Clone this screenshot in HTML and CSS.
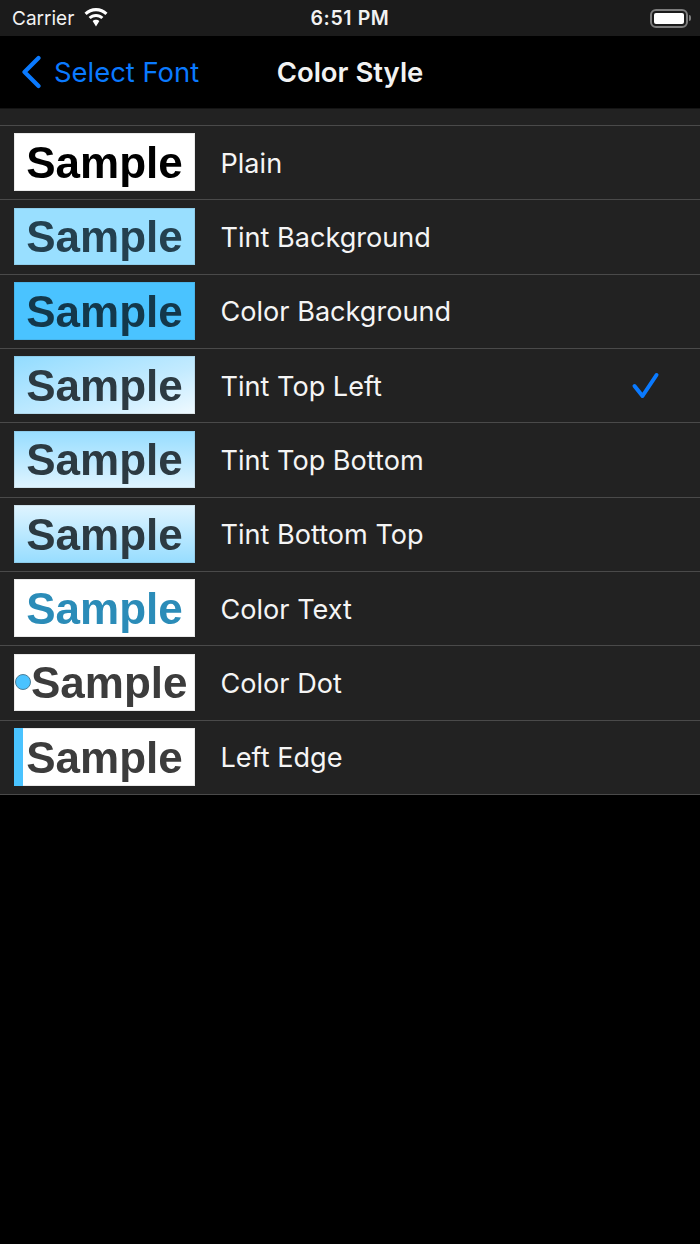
FILE: index.html
```html
<!DOCTYPE html>
<html lang="en">
<head>
<meta charset="utf-8">
<title>Color Style</title>
<link rel="stylesheet" href="styles.css">
</head>
<body>
<header class="status">
  <div class="status-left">
    <span class="carrier">Carrier</span>
    <svg class="wifi" viewBox="0 0 26 19" width="26" height="19"><path d="M13 3.200c3.600 0 6.900 1.400 9.400 3.700l2.100-2.200C21.500 1.900 17.500 0 13 0S4.500 1.900 1.500 4.700l2.100 2.200C6.100 4.600 9.400 3.200 13 3.200zM13 9c2 0 3.900.8 5.300 2.100l2.100-2.200C18.400 7.100 15.800 6 13 6S7.600 7.100 5.600 8.900l2.100 2.200C9.100 9.800 11 9 13 9zM13 11.800c-1.300 0-2.500.5-3.400 1.300L13 18.500l3.400-5.400c-.9-.8-2.100-1.300-3.400-1.300z" fill="#fff"/></svg>
  </div>
  <span class="clock">6:51 PM</span>
  <div class="status-right">
    <span class="battery"><span class="battery-fill"></span></span>
    <span class="battery-cap"></span>
  </div>
</header>
<nav class="navbar">
  <a class="back">
    <svg class="chevron" viewBox="0 0 20 34" width="20" height="34"><path d="M17.500 3L3.500 17l14 14" fill="none" stroke="#0a7aff" stroke-width="4.200" stroke-linecap="round" stroke-linejoin="round"/></svg>
    <span>Select Font</span>
  </a>
  <h1 class="title">Color Style</h1>
</nav>
<div class="spacer"></div>
<ul class="list">
  <li class="row"><div class="thumb plain"><span class="sample black">Sample</span></div><span class="label">Plain</span></li>
  <li class="row"><div class="thumb tint"><span class="sample dark">Sample</span></div><span class="label">Tint Background</span></li>
  <li class="row"><div class="thumb color"><span class="sample darker">Sample</span></div><span class="label">Color Background</span></li>
  <li class="row"><div class="thumb tl"><span class="sample grey">Sample</span></div><span class="label">Tint Top Left</span>
    <svg class="check" viewBox="0 0 30 30" width="30" height="30"><path d="M3.500 15L11.500 25L25.500 4" fill="none" stroke="#0a7aff" stroke-width="4" stroke-linecap="round" stroke-linejoin="round"/></svg></li>
  <li class="row"><div class="thumb tb"><span class="sample grey">Sample</span></div><span class="label">Tint Top Bottom</span></li>
  <li class="row"><div class="thumb bt"><span class="sample grey">Sample</span></div><span class="label">Tint Bottom Top</span></li>
  <li class="row"><div class="thumb plain"><span class="sample blue">Sample</span></div><span class="label">Color Text</span></li>
  <li class="row"><div class="thumb plain dotted"><span class="dot"></span><span class="sample charcoal">Sample</span></div><span class="label">Color Dot</span></li>
  <li class="row"><div class="thumb plain edged"><span class="edge"></span><span class="sample charcoal">Sample</span></div><span class="label">Left Edge</span></li>
</ul>
</body>
</html>
```
FILE: styles.css
```css
* { box-sizing: border-box; }
html, body { margin: 0; padding: 0; background: #000; }
body {
  width: 700px;
  height: 1244px;
  overflow: hidden;
  font-family: Inter, "Liberation Sans", sans-serif;
  color: #fff;
}
.status {
  height: 36px;
  background: #1b1b1b;
  display: flex;
  align-items: center;
  justify-content: space-between;
  padding: 0 9px 0 12px;
  position: relative;
}
.status-left { display: flex; align-items: center; gap: 9px; }
.carrier { font-size: 19px; color: #f2f2f2; }
.wifi { margin-top: -1px; }
.clock {
  position: absolute;
  left: 0;
  right: 0;
  text-align: center;
  font-size: 19.500px;
  font-weight: 600;
  letter-spacing: 0.6px;
  color: #f2f2f2;
}
.status-right { display: flex; align-items: center; gap: 1px; }
.battery {
  width: 38px;
  height: 19px;
  border: 2px solid #7c7c7c;
  border-radius: 6px;
  padding: 2px;
  display: flex;
}
.battery-fill { flex: 1; background: #fff; border-radius: 2px; }
.battery-cap { width: 2px; height: 6px; background: #7c7c7c; border-radius: 0 2px 2px 0; }
.navbar {
  height: 72px;
  background: #000;
  display: flex;
  align-items: center;
  position: relative;
  padding-left: 21px;
}
.back {
  display: flex;
  align-items: center;
  gap: 13px;
  color: #0a7aff;
  font-size: 27.400px;
}
.title {
  position: absolute;
  left: 0;
  right: 0;
  margin: 0;
  text-align: center;
  font-size: 27.500px;
  font-weight: 600;
  color: #f2f2f2;
}
.spacer { height: 17px; background: #222; border-top: 1px solid #141414; }
.list {
  list-style: none;
  margin: 0;
  padding: 0;
  background: #222;
  border-top: 1px solid #4a4a4a;
}
.row {
  height: 74.330px;
  display: flex;
  align-items: center;
  padding: 0 0 1px 14px;
  border-bottom: 1px solid #4a4a4a;
  position: relative;
}
.thumb {
  width: 181px;
  height: 57.500px;
  display: flex;
  align-items: center;
  justify-content: center;
  flex: none;
  margin-right: 25.500px;
  position: relative;
  overflow: hidden;
  box-shadow: inset 0 0 0 1px rgba(50, 50, 50, 0.1);
}
.sample {
  font-family: "Liberation Sans", Arial, sans-serif;
  font-weight: 700;
  font-size: 44px;
  line-height: 1;
  margin-top: 2px;
  filter: blur(0.7px);
}
.plain { background: #fff; }
.tint { background: #99dfff; }
.color { background: #4ac3ff; }
.tl { background: linear-gradient(to bottom right, #92dcff, #c4ebff 60%, #f0faff); }
.tb { background: linear-gradient(to bottom, #97ddff, #dff4ff); }
.bt { background: linear-gradient(to top, #97ddff, #dff4ff); }
.black { color: #000; }
.dark { color: #24404f; }
.darker { color: #13384b; }
.grey { color: #2c3a42; }
.blue { color: #2b8cb8; }
.charcoal { color: #3c3c3c; }
.dotted { justify-content: flex-start; padding-left: 17px; }
.dot {
  position: absolute;
  left: 1px;
  top: 20.500px;
  width: 16px;
  height: 16px;
  border-radius: 50%;
  background: #4ac3ff;
  border: 1px solid #4d7f99;
}
.edge {
  position: absolute;
  left: 0;
  top: 0;
  bottom: 0;
  width: 9px;
  background: #4ac3ff;
}
.label { font-size: 27.100px; color: #f5f5f5; margin-top: 2px; }
.check { position: absolute; left: 631px; top: 22px; }
```
